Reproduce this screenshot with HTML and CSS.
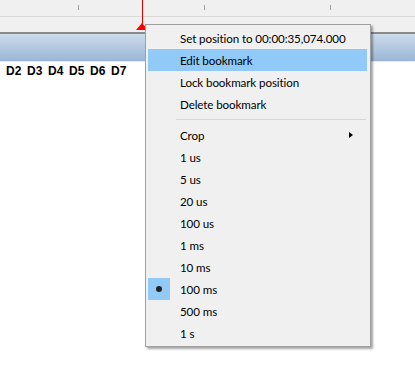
FILE: index.html
```html
<!DOCTYPE html>
<html>
<head>
<meta charset="utf-8">
<link rel="stylesheet" href="styles.css">
</head>
<body>
<div class="app">
  <div class="ruler">
    <span class="tick" style="left:78px"></span>
    <span class="tick" style="left:204px"></span>
    <span class="tick" style="left:330px"></span>
  </div>
  <div class="ruler2"></div>
  <div class="marker">
    <span class="marker-line"></span>
    <span class="marker-head"></span>
  </div>
  <div class="header"></div>
  <div class="channels">
    <span>D2</span><span>D3</span><span>D4</span><span>D5</span><span>D6</span><span>D7</span>
  </div>
  <div class="menu">
    <div class="item">Set position to 00:00:35,074.000</div>
    <div class="item hover">Edit bookmark</div>
    <div class="item">Lock bookmark position</div>
    <div class="item">Delete bookmark</div>
    <div class="sep"></div>
    <div class="item">Crop<span class="arrow"></span></div>
    <div class="item">1 us</div>
    <div class="item">5 us</div>
    <div class="item">20 us</div>
    <div class="item">100 us</div>
    <div class="item">1 ms</div>
    <div class="item">10 ms</div>
    <div class="item checked"><span class="check"><span class="dot"></span></span>100 ms</div>
    <div class="item">500 ms</div>
    <div class="item">1 s</div>
  </div>
</div>
</body>
</html>
```
FILE: styles.css
```css
html, body {
  margin: 0;
  padding: 0;
  background: #ffffff;
}
.app {
  position: relative;
  width: 415px;
  height: 372px;
  overflow: hidden;
  background: #ffffff;
}
.ruler {
  position: relative;
  height: 16px;
  background: #f0f0f0;
  border-bottom: 1px solid #d9d9d9;
}
.tick {
  position: absolute;
  top: 5px;
  width: 1px;
  height: 5px;
  background: #a0a0a0;
}
.ruler2 {
  height: 15px;
  background: #f0f0f0;
  border-bottom: 2px solid #8a8a8a;
}
.marker {
  position: absolute;
  left: 136px;
  top: 0;
  width: 13px;
  height: 30px;
}
.marker-line {
  position: absolute;
  left: 6px;
  top: 0;
  width: 1px;
  height: 25px;
  background: #e00000;
}
.marker-head {
  position: absolute;
  left: 0;
  top: 23px;
  width: 0;
  height: 0;
  border-left: 6px solid transparent;
  border-right: 6px solid transparent;
  border-bottom: 7px solid #ff0000;
}
.header {
  height: 27px;
  background: linear-gradient(#cddbeb, #9ab6d6);
  border-bottom: 1px solid #e3e9f0;
}
.channels {
  display: flex;
  gap: 6px;
  padding: 2px 0 0 6px;
  font-family: "Liberation Sans", Arial, sans-serif;
  font-weight: bold;
  font-size: 12px;
  color: #000;
}
.channels span {
  width: 15px;
}
.menu {
  position: absolute;
  left: 145px;
  top: 24px;
  width: 219px;
  padding: 2px 3px 2px 2px;
  background: #f0f0f0;
  border: 1px solid #a0a0a0;
  box-shadow: 2px 2px 2px rgba(0, 0, 0, 0.35);
  font-family: Lato, "Noto Sans", sans-serif;
  font-size: 11.6px;
  letter-spacing: -0.1px;
  color: #000;
}
.item {
  position: relative;
  height: 21px;
  padding-top: 1px;
  line-height: 22px;
  padding-left: 32px;
  white-space: nowrap;
}
.item.hover {
  background: #91c9f7;
}
.sep {
  height: 1px;
  margin: 4px 1px 4px 28px;
  background: #d7d7d7;
}
.arrow {
  position: absolute;
  left: 201px;
  top: 8px;
  width: 0;
  height: 0;
  border-top: 3.5px solid transparent;
  border-bottom: 3.5px solid transparent;
  border-left: 4px solid #000;
}
.check {
  position: absolute;
  left: 0;
  top: 0;
  width: 22px;
  height: 22px;
  background: #91c9f7;
  display: flex;
  align-items: center;
  justify-content: center;
}
.dot {
  width: 6px;
  height: 6px;
  border-radius: 50%;
  background: #222;
}
```
